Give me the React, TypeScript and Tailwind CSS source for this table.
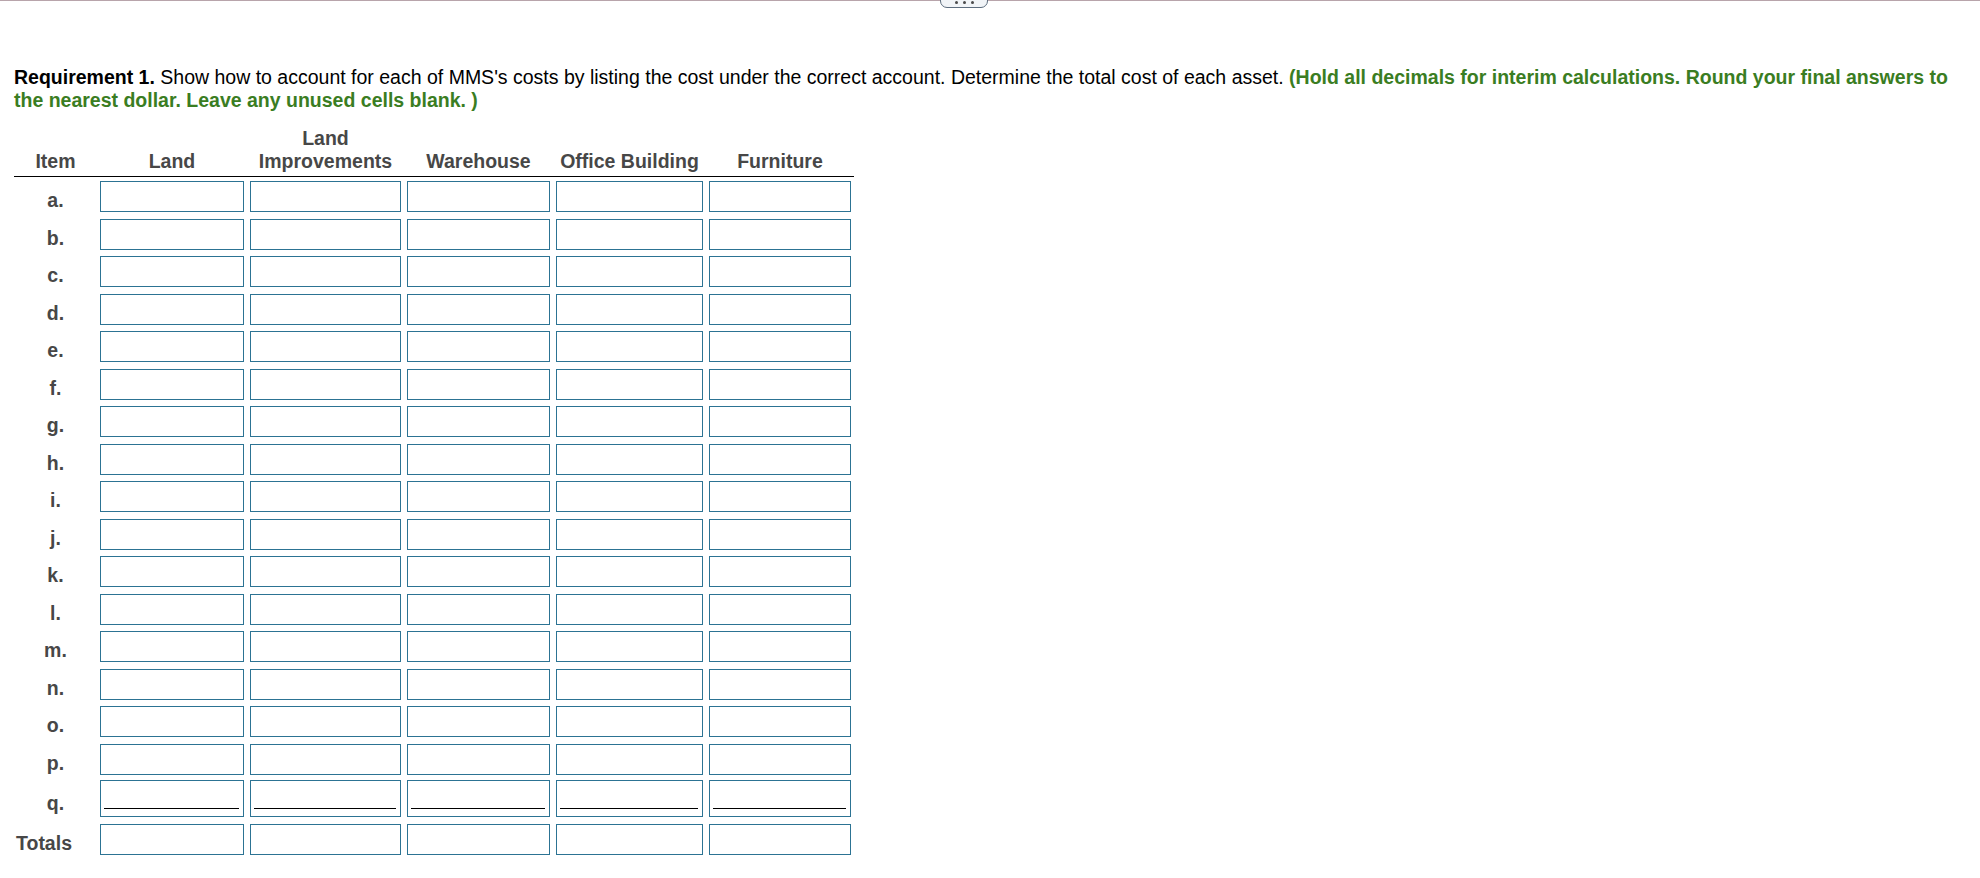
import React from "react";

const columns = [
  { key: "land", label: ["Land"], col: "w-[150px]" },
  { key: "improvements", label: ["Land", "Improvements"], col: "w-[157px]" },
  { key: "warehouse", label: ["Warehouse"], col: "w-[149px]" },
  { key: "office", label: ["Office Building"], col: "w-[153px]" },
  { key: "furniture", label: ["Furniture"], col: "w-[148px]" },
];

const items = ["a.", "b.", "c.", "d.", "e.", "f.", "g.", "h.", "i.", "j.", "k.", "l.", "m.", "n.", "o."];

function Cell({ underline = false, tall = false }: { underline?: boolean; tall?: boolean }) {
  return (
    <div
      className={`relative w-full border border-[#2c7393] bg-white ${tall ? "h-[37px]" : "h-[31px]"}`}
    >
      {underline && (
        <div className="absolute left-[3px] right-[4px] bottom-[7px] h-px bg-black" />
      )}
    </div>
  );
}

function Row({
  label,
  rowClass,
  labelClass,
  underline,
  tall,
}: {
  label: string;
  rowClass: string;
  labelClass: string;
  underline?: boolean;
  tall?: boolean;
}) {
  return (
    <div className={`flex items-start ${rowClass}`}>
      <div className={`w-[83px] font-bold text-[#474747] ${labelClass}`}>{label}</div>
      {columns.map((c) => (
        <div key={c.key} className={`${c.col} px-[3px]`}>
          <Cell underline={underline} tall={tall} />
        </div>
      ))}
    </div>
  );
}

export default function App() {
  return (
    <div className="relative min-h-screen bg-white font-['Liberation_Sans',Arial,sans-serif] text-[19.5px] leading-[22px] text-black">
      <div className="h-px bg-[#b8a4ab]" />
      <div className="absolute left-[940px] top-[-10px] flex h-[18px] w-[48px] items-end justify-center gap-[5px] rounded-[7px] border border-[#5d6d7e] bg-[#f1f4f7] pb-[3px]">
        <span className="h-[3px] w-[3px] rounded-full bg-[#4a4a4a]" />
        <span className="h-[3px] w-[3px] rounded-full bg-[#4a4a4a]" />
        <span className="h-[3px] w-[3px] rounded-full bg-[#4a4a4a]" />
      </div>

      <div className="px-[14px]">
        <p className="mt-[65px] leading-[23px]">
          <span className="font-bold">Requirement 1.</span> Show how to account for each of MMS's costs
          by listing the cost under the correct account. Determine the total cost of each asset.{" "}
          <span className="font-bold text-[#3a7d22]">
            (Hold all decimals for interim calculations. Round your final answers to the nearest
            dollar. Leave any unused cells blank. )
          </span>
        </p>

        <div className="mt-[15px] w-[840px]">
          <div className="flex items-end border-b border-black pb-[3px] font-bold leading-[23px] text-[#474747]">
            <div className="w-[83px] text-center">Item</div>
            {columns.map((c) => (
              <div key={c.key} className={`${c.col} text-center`}>
                {c.label.map((l) => (
                  <div key={l}>{l}</div>
                ))}
              </div>
            ))}
          </div>

          <div className="pt-[4px]">
            {items.map((it) => (
              <Row key={it} label={it} rowClass="h-[37.5px]" labelClass="pt-[8px] text-center" />
            ))}
            <Row label="p." rowClass="h-[36px]" labelClass="pt-[8px] text-center" />
            <Row label="q." rowClass="h-[44px]" labelClass="pt-[12px] text-center" underline tall />
            <Row label="Totals" rowClass="h-[31px]" labelClass="pt-[8px] pl-[2px]" />
          </div>
        </div>
      </div>
    </div>
  );
}
